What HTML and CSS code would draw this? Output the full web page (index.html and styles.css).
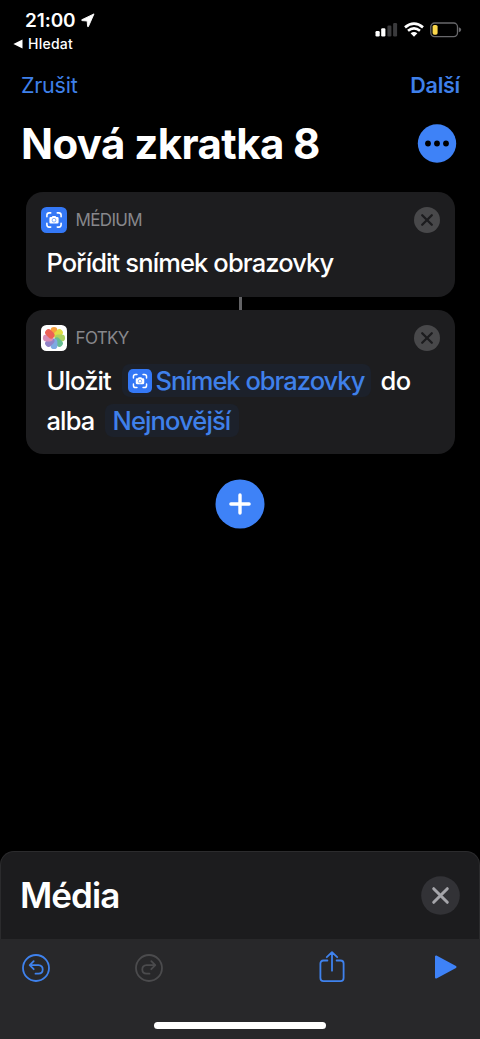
FILE: index.html
```html
<!DOCTYPE html>
<html lang="cs">
<head>
<meta charset="utf-8">
<title>Nová zkratka 8</title>
<link rel="stylesheet" href="styles.css">
</head>
<body>
<svg width="0" height="0" class="defs" aria-hidden="true">
  <symbol id="shot" viewBox="0 0 26 26">
    <rect width="26" height="26" rx="5.5" fill="#3478f6"/>
    <path d="M5.9 9.7V8.2Q5.9 5.9 8.2 5.9H9.7M16.3 5.9H17.8Q20.1 5.9 20.1 8.2V9.7M20.1 16.3V17.8Q20.1 20.1 17.8 20.1H16.3M9.7 20.1H8.2Q5.9 20.1 5.9 17.8V16.3" fill="none" stroke="#fff" stroke-width="1.6" stroke-linecap="round"/>
    <path d="M9.6 10H10.8L11.5 9H14.5L15.2 10H16.4Q17.6 10 17.6 11.2V15.3Q17.6 16.5 16.4 16.5H9.6Q8.4 16.5 8.4 15.3V11.2Q8.4 10 9.6 10Z" fill="#fff"/>
    <circle cx="13" cy="13.2" r="1.9" fill="none" stroke="#3478f6" stroke-width=".6"/>
  </symbol>
  <symbol id="remove" viewBox="0 0 26 26">
    <circle cx="13" cy="13" r="13" fill="#48484a"/>
    <path d="M8.2 8.2 17.8 17.8M17.8 8.2 8.2 17.8" stroke="#1c1c1e" stroke-width="2.3" stroke-linecap="round"/>
  </symbol>
</svg>
<div class="screen">
  <header class="status">
    <div class="status-left">
      <div class="clock"><span>21:00</span>
        <svg width="14" height="15" viewBox="0 0 14 15"><path d="M13 .9 7.4 13.6Q6.9 14.2 6.6 13.4L6.2 8 1 7.6Q.2 7.2.9 6.7Z" fill="#fff" stroke="#fff" stroke-width=".9" stroke-linejoin="round"/></svg>
      </div>
      <div class="back">
        <svg width="10" height="10" viewBox="0 0 10 10"><path d="M.4 5 9.5.4V9.6Z" fill="#fff"/></svg>
        <span>Hledat</span>
      </div>
    </div>
    <div class="status-right">
      <svg width="24" height="16" viewBox="0 0 24 16"><rect x=".5" y="9" width="4.2" height="5.5" rx="1.2" fill="#fff"/><rect x="6.2" y="6.3" width="4.2" height="8.2" rx="1.2" fill="#fff"/><rect x="12.4" y="3.5" width="4" height="11" rx="1.2" fill="#3a3a3c"/><rect x="18.1" y="1" width="4" height="13.5" rx="1.2" fill="#3a3a3c"/></svg>
      <svg width="20" height="15" viewBox="0 0 20 15"><g fill="none" stroke="#fff" stroke-width="2.7"><path d="M1 5.4Q10-2.2 19 5.4"/><path d="M4 8.7Q10 3.9 16 8.7"/></g><path d="M6.6 11.3Q10 8.7 13.4 11.3L10 14.7Z" fill="#fff"/></svg>
      <svg width="33" height="16" viewBox="0 0 33 16"><rect x="1.8" y="1" width="26.7" height="13.6" rx="3.8" fill="none" stroke="#68686b" stroke-width="1.3"/><rect x="3.6" y="2.9" width="5" height="9.8" rx="1.7" fill="#fbd74a"/><path d="M29.8 5.3Q32.2 6.2 32.2 7.8T29.8 10.3Z" fill="#68686b"/></svg>
    </div>
  </header>
  <nav class="nav"><a class="cancel">Zrušit</a><a class="next">Další</a></nav>
  <div class="title-row">
    <h1>Nová zkratka 8</h1>
    <svg width="40" height="40" viewBox="0 0 40 40"><circle cx="20" cy="19.5" r="19.2" fill="#3e82f7"/><g fill="#000"><circle cx="11" cy="19.5" r="2.9"/><circle cx="20" cy="19.5" r="2.9"/><circle cx="29" cy="19.5" r="2.9"/></g></svg>
  </div>
  <main class="flow">
    <section class="card first">
      <div class="card-head"><svg width="26" height="26"><use href="#shot"/></svg><span class="cat medium">MÉDIUM</span><svg width="26" height="26"><use href="#remove"/></svg></div>
      <p class="line capture">Pořídit snímek obrazovky</p>
    </section>
    <div class="link"></div>
    <section class="card second">
      <div class="card-head">
        <svg width="26" height="26" viewBox="0 0 26 26"><rect width="26" height="26" rx="5.5" fill="#fff"/>
          <g class="petals">
            <rect x="9.6" y="1.9" width="6.8" height="10.4" rx="3.4" fill="#f8a13e"/>
            <rect x="9.6" y="1.9" width="6.8" height="10.4" rx="3.4" fill="#e0dc45" transform="rotate(45 13 13)"/>
            <rect x="9.6" y="1.9" width="6.8" height="10.4" rx="3.4" fill="#abd060" transform="rotate(90 13 13)"/>
            <rect x="9.6" y="1.9" width="6.8" height="10.4" rx="3.4" fill="#67bd92" transform="rotate(135 13 13)"/>
            <rect x="9.6" y="1.9" width="6.8" height="10.4" rx="3.4" fill="#7eaae2" transform="rotate(180 13 13)"/>
            <rect x="9.6" y="1.9" width="6.8" height="10.4" rx="3.4" fill="#9283c8" transform="rotate(225 13 13)"/>
            <rect x="9.6" y="1.9" width="6.8" height="10.4" rx="3.4" fill="#d88db6" transform="rotate(270 13 13)"/>
            <rect x="9.6" y="1.9" width="6.8" height="10.4" rx="3.4" fill="#ed6156" transform="rotate(315 13 13)"/>
          </g></svg>
        <span class="cat photos">FOTKY</span><svg width="26" height="26"><use href="#remove"/></svg>
      </div>
      <div class="line row-a"><span class="save">Uložit</span><span class="token variable"><svg width="24" height="24"><use href="#shot"/></svg><span class="shot-name">Snímek obrazovky</span></span><span class="to">do</span></div>
      <div class="line row-b"><span class="album">alba</span><span class="token newest">Nejnovější</span></div>
    </section>
    <svg class="add" width="50" height="50" viewBox="0 0 50 50"><circle cx="25" cy="25" r="24.5" fill="#3e82f7"/><path d="M25 15.9V34.1M15.9 25H34.1" stroke="#fff" stroke-width="3.4" stroke-linecap="round"/></svg>
  </main>
  <section class="sheet">
    <h2>Média</h2>
    <svg width="39" height="39" viewBox="0 0 39 39"><circle cx="19.5" cy="19.5" r="19.3" fill="#323236"/><path d="M12.7 12.7 26.3 26.3M26.3 12.7 12.7 26.3" stroke="#a5a5aa" stroke-width="3" stroke-linecap="round"/></svg>
  </section>
  <footer class="toolbar">
    <div class="tools">
      <svg width="28" height="28" viewBox="0 0 28 28" fill="none" stroke="#3f82ed" stroke-width="1.8" stroke-linecap="round" stroke-linejoin="round"><circle cx="14" cy="14" r="13"/><path d="M11.7 7.2 7.7 11.2 11.7 15.2M7.9 11.2H16.4Q20.7 11.4 20.7 15.4T16.4 19.7H13.5"/></svg>
      <svg class="redo" width="28" height="28" viewBox="0 0 28 28" fill="none" stroke="#4b4b4d" stroke-width="1.8" stroke-linecap="round" stroke-linejoin="round"><circle cx="14" cy="14" r="13"/><path d="M16.3 7.2 20.3 11.2 16.3 15.2M20.1 11.2H11.6Q7.3 11.4 7.3 15.4T11.6 19.7H14.5"/></svg>
      <svg class="share" width="26" height="32" viewBox="0 0 26 32" fill="none" stroke="#3f82ed" stroke-width="1.8" stroke-linecap="round" stroke-linejoin="round"><path d="M8.4 9.5H4.5Q1.4 9.5 1.4 12.6V27Q1.4 30.1 4.5 30.1H21.5Q24.6 30.1 24.6 27V12.6Q24.6 9.5 21.5 9.5H17.6M13 19.7V1.4M7.8 6.2 13 1.2 18.2 6.2"/></svg>
      <svg class="play" width="24" height="26" viewBox="0 0 24 26"><path d="M2 2.5V23.5L21.5 13Z" fill="#3e82f7" stroke="#3e82f7" stroke-width="2" stroke-linejoin="round"/></svg>
    </div>
    <div class="home"></div>
  </footer>
</div>
</body>
</html>
```
FILE: styles.css
```css
* { box-sizing: border-box; }
body { margin: 0; background: #000; color: #fff; font-family: Inter, "Liberation Sans", sans-serif; }
svg { display: block; flex: none; }
span, a, h1, h2, p { white-space: nowrap; }
.defs { display: none; }
.screen { width: 480px; height: 1039px; display: flex; flex-direction: column; overflow: hidden; }
.status { height: 60px; display: flex; justify-content: space-between; padding: 8px 18px 0 13px; }
.clock { display: flex; align-items: center; gap: 5px; height: 24px; padding-left: 12px; font-size: 19px; font-weight: 600; letter-spacing: -.1px; }
.back { display: flex; align-items: center; gap: 5px; height: 23px; font-size: 14px; font-weight: 500; letter-spacing: .25px; }
.status-right { display: flex; gap: 5px; padding-top: 14px; }
.nav { height: 50px; display: flex; justify-content: space-between; align-items: center; padding: 0 20px 1px 21px; color: #3f80ea; font-size: 21.5px; letter-spacing: -.25px; }
.next { font-weight: 600; }
.title-row { height: 68px; display: flex; align-items: center; justify-content: space-between; padding: 0 23px 0 21px; }
h1 { margin: 0; font-size: 42px; font-weight: 700; line-height: 68px; letter-spacing: -.58px; }
.flow { flex: 1; padding: 14px 26px 0 26px; display: flex; flex-direction: column; align-items: center; }
.card { width: 429px; background: #1d1d1f; border-radius: 17px; padding: 15px 15px 0; }
.first { height: 104.5px; }
.second { height: 144.5px; }
.card-head { display: flex; align-items: center; height: 26px; }
.cat { flex: 1; padding-left: 9px; color: #87878b; font-size: 17px; letter-spacing: -.65px; }
.line { margin: 0; padding-left: 6px; font-size: 25.5px; font-weight: 500; letter-spacing: -.88px; }
.capture { line-height: 34px; margin-top: 13px; }
.link { width: 3px; height: 13px; background: #636366; }
.row-a, .row-b { display: flex; align-items: center; height: 33px; }
.row-a { margin-top: 13.5px; }
.row-b { margin-top: 6.5px; }
.token { display: flex; align-items: center; height: 33px; border-radius: 8px; background: #1c212b; color: #3f80ea; }
.save { width: 75px; }
.variable { width: 249px; padding-left: 6px; gap: 4px; }
.shot-name { letter-spacing: -1px; }
.to { margin-left: 10px; letter-spacing: -.4px; }
.album { width: 58px; }
.newest { width: 134px; padding-left: 8px; }
.add { margin-top: 25px; }
.sheet { height: 88px; margin: 0; border: 1px solid #2b2b2d; border-bottom: 0; border-radius: 14px 14px 0 0; background: #1c1c1e; display: flex; align-items: center; justify-content: space-between; padding: 0 19px 0 19px; }
h2 { margin: 0 0 2px; font-size: 35px; font-weight: 600; letter-spacing: -.95px; }
.toolbar { height: 100px; background: #28282a; }
.tools { height: 86px; display: flex; align-items: flex-start; padding: 14.5px 22px 0; }
.redo { margin-left: 85px; }
.share { margin-left: 156px; margin-top: -2.5px; }
.play { margin-left: auto; }
.home { width: 172px; height: 7px; margin: -3px auto 0; border-radius: 4px; background: #fff; }
```
